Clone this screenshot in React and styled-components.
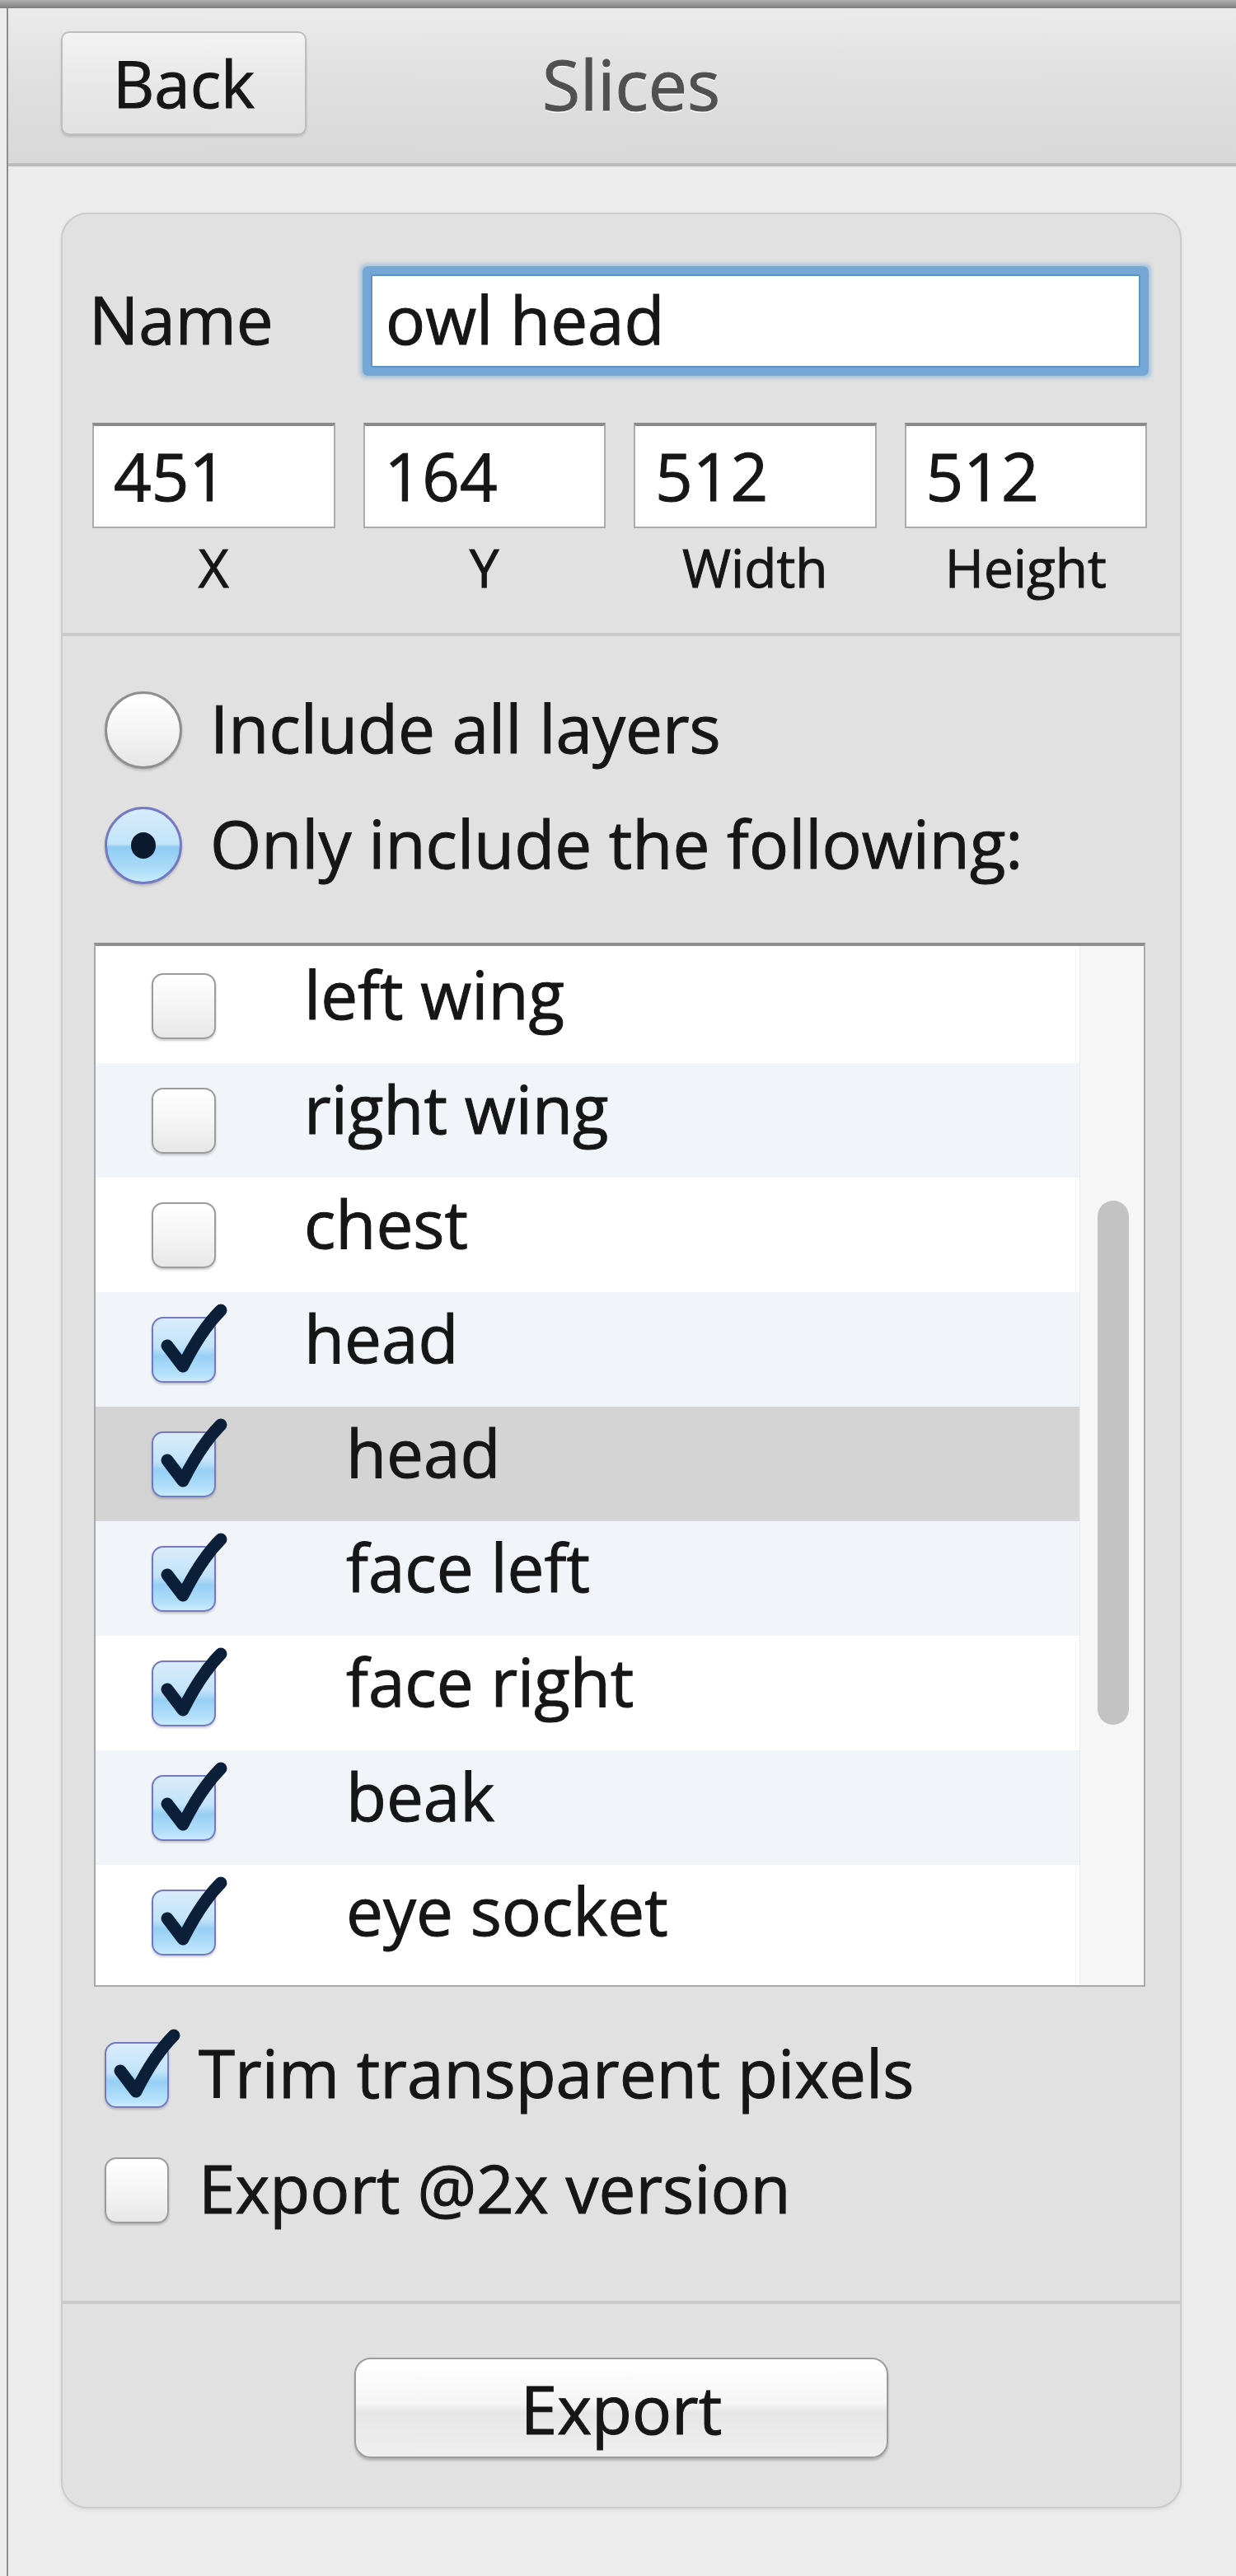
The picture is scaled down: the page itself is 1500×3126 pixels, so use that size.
import React from 'react';
import styled, { createGlobalStyle, css } from 'styled-components';

const Global = createGlobalStyle`
  html, body { margin: 0; padding: 0; background: #ececec; }
  body {
    font-family: "Open Sans", "DejaVu Sans", sans-serif;
    color: #161616;
    -webkit-text-stroke: 1px currentColor;
  }
  * { box-sizing: border-box; }
`;

const Window = styled.div`
  width: 1500px;
  height: 3126px;
  display: flex;
  flex-direction: column;
  background: #ececec;
  overflow: hidden;
`;

const TitleStrip = styled.div`
  flex: none;
  height: 10px;
  background: linear-gradient(#b0b0b0, #7e7e7e);
`;

const Frame = styled.div`
  flex: 1;
  margin-left: 8px;
  border-left: 2px solid #8e8e8e;
  display: flex;
  flex-direction: column;
`;

const Header = styled.header`
  flex: none;
  height: 192px;
  display: grid;
  grid-template-columns: 1fr auto 1fr;
  align-items: center;
  padding: 0 64px 6px 64px;
  background: linear-gradient(#ebebeb, #e1e1e1 40%, #d8d8d8);
  border-bottom: 4px solid #bcbcbc;
`;

const PushButton = styled.button`
  font-family: "Open Sans", "DejaVu Sans", sans-serif;
  color: #161616;
  -webkit-text-stroke: 1px currentColor;
  padding: 0;
  cursor: default;
  display: flex;
  align-items: center;
  justify-content: center;
  ${(p) =>
    p.$size === 'wide'
      ? css`
          width: 648px;
          height: 122px;
          border-radius: 20px;
          font-size: 80px;
          border: 2px solid #9c9c9c;
          background: linear-gradient(#ffffff, #f6f6f6 45%, #e6e6e6 55%, #f0f0f0);
          box-shadow: 0 3px 3px rgba(0, 0, 0, 0.2);
        `
      : css`
          width: 298px;
          height: 126px;
          border-radius: 10px;
          font-size: 78px;
          justify-self: start;
          border: 2px solid #bdbdbd;
          background: linear-gradient(#f3f3f3, #e8e8e8 50%, #e2e2e2);
          box-shadow: 0 2px 3px rgba(0, 0, 0, 0.15);
        `}
`;

const Title = styled.h1`
  margin: 0;
  padding-left: 22px;
  font-size: 84px;
  font-weight: 400;
  color: #505050;
  text-shadow: 0 2px 0 rgba(255, 255, 255, 0.85);
`;

const Content = styled.main`
  flex: 1;
  padding: 56px 66px 0 64px;
`;

const Panel = styled.section`
  display: flex;
  flex-direction: column;
  border: 2px solid #cbcbcb;
  border-radius: 32px;
  background: #e1e1e1;
  box-shadow: 0 2px 4px rgba(0, 0, 0, 0.08);
  overflow: hidden;
`;

const Divider = styled.div`
  height: 4px;
  background: #c9c9c9;
`;

const TopSection = styled.div`
  height: 508px;
  padding: 72px 40px 0 36px;
`;

const NameRow = styled.div`
  display: grid;
  grid-template-columns: 338px 1fr;
  align-items: center;
`;

const FieldLabel = styled.label`
  font-size: 80px;
  margin-left: -4px;
  margin-bottom: 6px;
`;

const NameInput = styled.div`
  height: 113px;
  margin-right: 8px;
  padding: 0 0 6px 16px;
  display: flex;
  align-items: center;
  background: #fff;
  font-size: 80px;
  border-radius: 2px;
  border: 2px solid #5f93c8;
  box-shadow: 0 0 0 10px #74a7d6, 0 0 5px 13px rgba(116, 167, 214, 0.55);
`;

const Grid4 = styled.div`
  display: grid;
  grid-template-columns: repeat(4, 1fr);
  column-gap: 34px;
  margin-top: ${(p) => p.$gap || 0}px;
`;

const NumField = styled.div`
  height: 128px;
  display: flex;
  align-items: center;
  padding: 0 0 4px 24px;
  font-size: 80px;
  background: #fff;
  border: 2px solid #ababab;
  border-top: 4px solid #8b8b8b;
`;

const Caption = styled.div`
  text-align: center;
  font-size: 64px;
  line-height: 80px;
`;

const MiddleSection = styled.div`
  height: 2020px;
  padding: 65px 42px 0 38px;
  display: flex;
  flex-direction: column;
`;

const OptionRow = styled.div`
  display: flex;
  align-items: center;
  height: ${(p) => p.$h}px;
  margin-left: 13px;
  margin-top: ${(p) => p.$mt || 0}px;
  gap: ${(p) => p.$gap}px;
  font-size: 80px;
  flex: none;
`;

const OptionText = styled.span`
  margin-bottom: 8px;
`;

const Radio = styled.span`
  position: relative;
  flex: none;
  width: 94px;
  height: 94px;
  border-radius: 50%;
  border: 3px solid ${(p) => (p.$on ? '#7479c2' : '#8f8f8f')};
  background: ${(p) =>
    p.$on
      ? 'linear-gradient(#d6ecfb, #c3e4fa 48%, #8fcbf3 52%, #a9dbf8 80%, #c8ecfc)'
      : 'linear-gradient(#ffffff, #f5f5f5 50%, #e6e6e6)'};
  box-shadow: 0 2px 3px rgba(0, 0, 0, 0.18);
  display: flex;
  align-items: center;
  justify-content: center;
  &::after {
    content: '';
    display: ${(p) => (p.$on ? 'block' : 'none')};
    width: 30px;
    height: 32px;
    border-radius: 50%;
    background: #0b1a2e;
  }
`;

const Box = styled.span`
  position: relative;
  flex: none;
  width: 78px;
  height: 80px;
  border-radius: 14px;
  border: 2px solid ${(p) => (p.$on ? '#7479c2' : '#9c9c9c')};
  background: ${(p) =>
    p.$on
      ? 'linear-gradient(#d9ecfb, #c2e3fa 45%, #97cff5 60%, #b6e1fb 90%, #c9ecfc)'
      : 'linear-gradient(#ffffff, #f5f5f5 50%, #e7e7e7)'};
  box-shadow: 0 2px 3px rgba(0, 0, 0, 0.2);
`;

const Tick = styled.svg`
  position: absolute;
  left: -2px;
  top: -2px;
  width: 78px;
  height: 80px;
  overflow: visible;
`;

function Check({ on }) {
  return (
    <Box $on={on}>
      {on && (
        <Tick viewBox="0 0 78 80">
          <path
            d="M19 35 L38 60 C 50 36, 66 10, 84 -8"
            fill="none"
            stroke="#0b1f38"
            strokeWidth="15"
            strokeLinecap="round"
            strokeLinejoin="round"
          />
        </Tick>
      )}
    </Box>
  );
}

const List = styled.div`
  flex: none;
  margin-top: 69px;
  height: 1267px;
  display: grid;
  grid-template-columns: 1fr 78px;
  background: #fff;
  border: 2px solid #a9a9a9;
  border-top: 4px solid #8f8f8f;
`;

const Rows = styled.div`
  padding-top: 3px;
  display: flex;
  flex-direction: column;
`;

const Row = styled.div`
  flex: none;
  height: 139px;
  display: flex;
  align-items: center;
  padding-left: 68px;
  font-size: 80px;
  background: ${(p) => (p.$selected ? '#d4d4d4' : p.$odd ? '#f1f4f9' : '#ffffff')};
`;

const RowText = styled.span`
  padding-left: ${(p) => (p.$nested ? 158 : 107)}px;
  line-height: 1;
  margin-bottom: 30px;
`;

const Track = styled.div`
  background: #f6f6f6;
  border-left: 1px solid #ebebeb;
  padding: 309px 0 0 21px;
`;

const Thumb = styled.div`
  width: 38px;
  height: 636px;
  border-radius: 19px;
  background: #c3c3c3;
`;

const BottomSection = styled.div`
  height: 246px;
  padding-top: 65px;
  display: flex;
  justify-content: center;
`;

const layers = [
  { name: 'left wing', on: false },
  { name: 'right wing', on: false },
  { name: 'chest', on: false },
  { name: 'head', on: true },
  { name: 'head', on: true, nested: true, selected: true },
  { name: 'face left', on: true, nested: true },
  { name: 'face right', on: true, nested: true },
  { name: 'beak', on: true, nested: true },
  { name: 'eye socket', on: true, nested: true },
];

const fields = [
  { v: '451', l: 'X' },
  { v: '164', l: 'Y' },
  { v: '512', l: 'Width' },
  { v: '512', l: 'Height' },
];

export default function App() {
  return (
    <>
      <Global />
      <Window>
        <TitleStrip />
        <Frame>
          <Header>
            <PushButton>Back</PushButton>
            <Title>Slices</Title>
            <span />
          </Header>
          <Content>
            <Panel>
              <TopSection>
                <NameRow>
                  <FieldLabel>Name</FieldLabel>
                  <NameInput>owl head</NameInput>
                </NameRow>
                <Grid4 $gap={66}>
                  {fields.map((f) => (
                    <NumField key={f.l}>{f.v}</NumField>
                  ))}
                </Grid4>
                <Grid4 $gap={8}>
                  {fields.map((f) => (
                    <Caption key={f.l}>{f.l}</Caption>
                  ))}
                </Grid4>
              </TopSection>
              <Divider />
              <MiddleSection>
                <OptionRow $h={98} $gap={34}>
                  <Radio />
                  <OptionText>Include all layers</OptionText>
                </OptionRow>
                <OptionRow $h={98} $gap={34} $mt={42}>
                  <Radio $on />
                  <OptionText>Only include the following:</OptionText>
                </OptionRow>
                <List>
                  <Rows>
                    {layers.map((l, i) => (
                      <Row key={i} $odd={i % 2 === 1} $selected={l.selected}>
                        <Check on={l.on} />
                        <RowText $nested={l.nested}>{l.name}</RowText>
                      </Row>
                    ))}
                  </Rows>
                  <Track>
                    <Thumb />
                  </Track>
                </List>
                <OptionRow $h={80} $gap={36} $mt={67}>
                  <Check on />
                  <OptionText>Trim transparent pixels</OptionText>
                </OptionRow>
                <OptionRow $h={80} $gap={36} $mt={60}>
                  <Check />
                  <OptionText>Export @2x version</OptionText>
                </OptionRow>
              </MiddleSection>
              <Divider />
              <BottomSection>
                <PushButton $size="wide">Export</PushButton>
              </BottomSection>
            </Panel>
          </Content>
        </Frame>
      </Window>
    </>
  );
}
